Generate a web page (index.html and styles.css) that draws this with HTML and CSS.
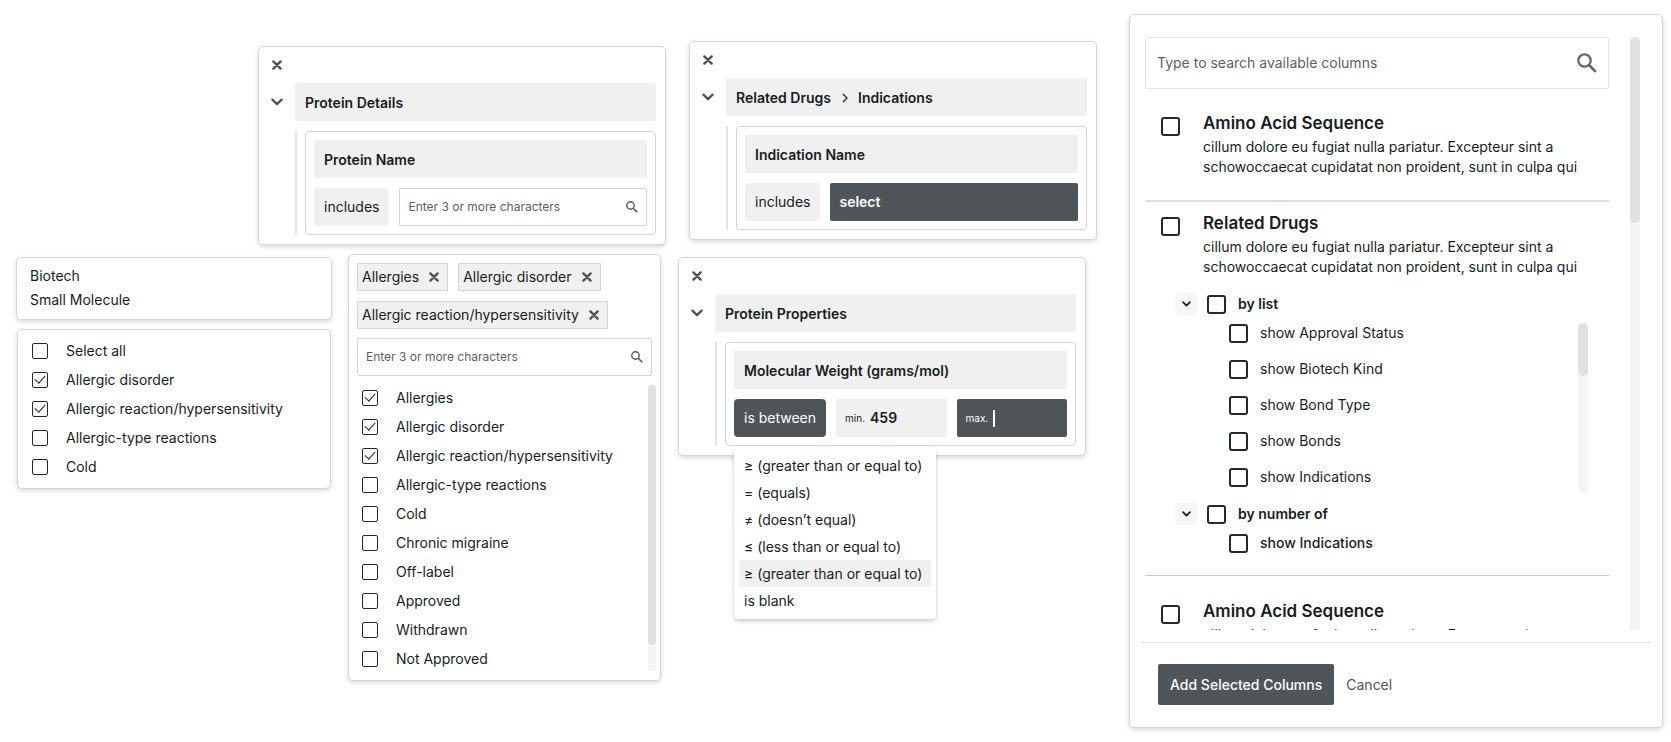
FILE: index.html
```
<!DOCTYPE html>
<html lang="en">
<head>
    <meta charset="utf-8">
    <title>Filters and columns</title>
    <link rel="stylesheet" href="styles.css">
</head>
<body>
    <!-- shared icons -->
    <svg class="sprite" aria-hidden="true">
        <symbol id="close" viewBox="0 0 10 10"><path d="M1.4 1.4l7.2 7.2M8.6 1.4L1.4 8.6" fill="none" stroke="currentColor" stroke-width="2.4" stroke-linecap="round"/></symbol>
        <symbol id="chevron" viewBox="0 0 12 8"><path d="M1.4 1.6L6 6.1l4.6-4.5" fill="none" stroke="currentColor" stroke-width="2.3" stroke-linecap="round" stroke-linejoin="round"/></symbol>
        <symbol id="search" viewBox="0 0 20 20"><circle cx="7.5" cy="7.5" r="6.2" fill="none" stroke="currentColor" stroke-width="2.3"/><path d="M12 12l6.8 6.8" fill="none" stroke="currentColor" stroke-width="2.6"/></symbol>
    </svg>

    <main class="page">
        <div class="canvas">
            <div class="row top-row">
                <section class="card filter low">
                    <button class="icon-button close" aria-label="Remove"><svg><use href="#close"/></svg></button>
                    <div class="group-head">
                        <button class="icon-button toggle" aria-label="Collapse"><svg><use href="#chevron"/></svg></button>
                        <h2 class="bar">Protein Details</h2>
                    </div>
                    <div class="group-body">
                        <div class="rule">
                            <h3 class="bar">Protein Name</h3>
                            <div class="rule-row">
                                <button class="operator">includes</button>
                                <div class="search-box">
                                    <input type="text" aria-label="Protein name" placeholder="Enter 3 or more characters">
                                    <svg><use href="#search"/></svg>
                                </div>
                            </div>
                        </div>
                    </div>
                </section>

                <section class="card filter">
                    <button class="icon-button close" aria-label="Remove"><svg><use href="#close"/></svg></button>
                    <div class="group-head">
                        <button class="icon-button toggle" aria-label="Collapse"><svg><use href="#chevron"/></svg></button>
                        <h2 class="bar">Related Drugs <svg class="crumb" viewBox="0 0 6 10"><path d="M1 1l4 4-4 4" fill="none" stroke="currentColor" stroke-width="1.2"/></svg> Indications</h2>
                    </div>
                    <div class="group-body">
                        <div class="rule">
                            <h3 class="bar">Indication Name</h3>
                            <div class="rule-row">
                                <button class="operator">includes</button>
                                <select class="value-select" aria-label="Indication name">
                                    <option>select</option>
                                </select>
                            </div>
                        </div>
                    </div>
                </section>
            </div>

            <div class="row bottom-row">
                <div class="side">
                    <ul class="card kinds">
                        <li>Biotech</li>
                        <li>Small Molecule</li>
                    </ul>
                    <div class="card checks">
                        <label class="check"><input type="checkbox">Select all</label>
                        <label class="check"><input type="checkbox" checked>Allergic disorder</label>
                        <label class="check"><input type="checkbox" checked>Allergic reaction/hypersensitivity</label>
                        <label class="check"><input type="checkbox">Allergic-type reactions</label>
                        <label class="check"><input type="checkbox">Cold</label>
                    </div>
                </div>

                <section class="card picker">
                    <div class="tags">
                        <span class="tag">Allergies <button class="icon-button" aria-label="Remove"><svg><use href="#close"/></svg></button></span>
                        <span class="tag">Allergic disorder <button class="icon-button" aria-label="Remove"><svg><use href="#close"/></svg></button></span>
                        <span class="tag">Allergic reaction/hypersensitivity <button class="icon-button" aria-label="Remove"><svg><use href="#close"/></svg></button></span>
                    </div>
                    <div class="search-box">
                        <input type="text" aria-label="Search indications" placeholder="Enter 3 or more characters">
                        <svg><use href="#search"/></svg>
                    </div>
                    <div class="picker-list">
                        <div class="options">
                            <label class="check"><input type="checkbox" checked>Allergies</label>
                            <label class="check"><input type="checkbox" checked>Allergic disorder</label>
                            <label class="check"><input type="checkbox" checked>Allergic reaction/hypersensitivity</label>
                            <label class="check"><input type="checkbox">Allergic-type reactions</label>
                            <label class="check"><input type="checkbox">Cold</label>
                            <label class="check"><input type="checkbox">Chronic migraine</label>
                            <label class="check"><input type="checkbox">Off-label</label>
                            <label class="check"><input type="checkbox">Approved</label>
                            <label class="check"><input type="checkbox">Withdrawn</label>
                            <label class="check"><input type="checkbox">Not Approved</label>
                        </div>
                        <div class="scrollbar"><div class="thumb" style="height:91%"></div></div>
                    </div>
                </section>

                <section class="card filter properties">
                    <button class="icon-button close" aria-label="Remove"><svg><use href="#close"/></svg></button>
                    <div class="group-head">
                        <button class="icon-button toggle" aria-label="Collapse"><svg><use href="#chevron"/></svg></button>
                        <h2 class="bar">Protein Properties</h2>
                    </div>
                    <div class="group-body">
                        <div class="rule">
                            <h3 class="bar">Molecular Weight (grams/mol)</h3>
                            <div class="rule-row">
                                <div class="operator-wrap">
                                    <button class="operator active">is between</button>
                                    <div class="menu">
                                        <button>≥ (greater than or equal to)</button>
                                        <button>= (equals)</button>
                                        <button>≠ (doesn’t equal)</button>
                                        <button>≤ (less than or equal to)</button>
                                        <button class="current">≥ (greater than or equal to)</button>
                                        <button>is blank</button>
                                    </div>
                                </div>
                                <label class="range">min. <input type="text" value="459"></label>
                                <label class="range active">max. <input type="text"></label>
                            </div>
                        </div>
                    </div>
                </section>
            </div>
        </div>

        <section class="card columns">
            <div class="columns-body">
                <div class="columns-list">
                    <div class="column-search">
                        <input type="text" aria-label="Search columns" placeholder="Type to search available columns">
                        <svg><use href="#search"/></svg>
                    </div>

                    <div class="column first">
                        <label class="column-head">
                            <input type="checkbox">
                            <span><strong>Amino Acid Sequence</strong>cillum dolore eu fugiat nulla pariatur. Excepteur sint a<br>schowoccaecat cupidatat non proident, sunt in culpa qui</span>
                        </label>
                    </div>

                    <div class="column">
                        <label class="column-head">
                            <input type="checkbox">
                            <span><strong>Related Drugs</strong>cillum dolore eu fugiat nulla pariatur. Excepteur sint a<br>schowoccaecat cupidatat non proident, sunt in culpa qui</span>
                        </label>
                        <div class="sub-head">
                            <button class="icon-button expand" aria-label="Collapse"><svg><use href="#chevron"/></svg></button>
                            <label><input type="checkbox">by list</label>
                        </div>
                        <div class="sub-list">
                            <div class="sub-items">
                                <label><input type="checkbox">show Approval Status</label>
                                <label><input type="checkbox">show Biotech Kind</label>
                                <label><input type="checkbox">show Bond Type</label>
                                <label><input type="checkbox">show Bonds</label>
                                <label><input type="checkbox">show Indications</label>
                            </div>
                            <div class="scrollbar wide"><div class="thumb" style="height:31%"></div></div>
                        </div>
                        <div class="sub-head">
                            <button class="icon-button expand" aria-label="Collapse"><svg><use href="#chevron"/></svg></button>
                            <label><input type="checkbox">by number of</label>
                        </div>
                        <div class="sub-list">
                            <div class="sub-items medium">
                                <label><input type="checkbox">show Indications</label>
                            </div>
                        </div>
                    </div>

                    <div class="column last">
                        <label class="column-head">
                            <input type="checkbox">
                            <span><strong>Amino Acid Sequence</strong>cillum dolore eu fugiat nulla pariatur. Excepteur sint a</span>
                        </label>
                    </div>
                </div>
                <div class="scrollbar wide tall"><div class="thumb" style="height:30%"></div></div>
            </div>
            <div class="columns-foot">
                <button class="primary">Add Selected Columns</button>
                <button class="plain">Cancel</button>
            </div>
        </section>
    </main>
</body>
</html>
```
FILE: styles.css
```
* {
    box-sizing: border-box;
}
body {
    margin: 0;
    background: #fff;
    color: #161d21;
    font: 14px/20px Inter, "Liberation Sans", sans-serif;
}
h2, h3, ul {
    margin: 0;
    padding: 0;
    font-size: 14px;
    list-style: none;
}
button, input, select {
    margin: 0;
    padding: 0;
    border: 0;
    background: none;
    color: inherit;
    font: inherit;
}
.sprite {
    display: none;
}
.page {
    display: flex;
    align-items: flex-start;
    gap: 32px;
    padding: 14px 8px 14px 16px;
}
.canvas {
    padding-top: 27px;
}
.card {
    background: #fff;
    border: 1px solid #d5d6d7;
    border-radius: 5px;
    box-shadow: 0 2px 5px rgba(0, 0, 0, 0.15);
}
.row {
    display: flex;
    align-items: flex-start;
}
.top-row {
    justify-content: flex-end;
    gap: 23px;
}
.low {
    margin-top: 5px;
}
.bottom-row {
    gap: 16px;
    margin-top: 9px;
    padding-right: 11px;
}
.icon-button {
    display: flex;
    align-items: center;
    justify-content: center;
    color: #4e5357;
}
.icon-button svg {
    width: 10px;
    height: 10px;
}

/* filter cards */
.filter {
    width: 408px;
    padding: 0 9px 9px 8px;
}
.close {
    width: 20px;
    height: 36px;
}
.group-head {
    display: flex;
    align-items: center;
    gap: 8px;
}
.toggle {
    width: 20px;
    height: 38px;
}
.toggle svg {
    width: 12px;
    height: 8px;
}
.bar {
    flex: 1;
    padding: 10px 10px 8px;
    background: #f0f0f0;
    border-radius: 2px;
    font-weight: 600;
}
.crumb {
    width: 6px;
    height: 10px;
    margin: 0 7px;
}
.group-body {
    margin: 10px 0 0 28px;
    padding-left: 8px;
    border-left: 2px solid #e3e3e4;
}
.rule {
    padding: 8px;
    border: 1px solid #d3d4d5;
    border-radius: 4px;
}
.rule-row {
    display: flex;
    gap: 10px;
    margin-top: 10px;
}
.operator {
    height: 38px;
    padding: 0 10px;
    background: #f0f0f0;
    border-radius: 4px;
}
.active {
    background: #4f5559;
    color: #fff;
}
.search-box {
    display: flex;
    flex: 1;
    align-items: center;
    min-width: 0;
    height: 38px;
    padding: 0 8px;
    border: 1px solid #d3d4d5;
    border-radius: 2px;
    color: #4e5357;
}
.search-box input {
    flex: 1;
    min-width: 0;
    font-size: 12px;
}
.search-box svg {
    width: 12px;
    height: 12px;
}
::placeholder {
    color: #5a5f62;
    opacity: 1;
}
.value-select {
    flex: 1;
    height: 38px;
    padding: 0 9px;
    appearance: none;
    background: #4f5559;
    border-radius: 2px;
    color: #fff;
    font-weight: 600;
}
.range {
    display: flex;
    flex: 1;
    align-items: center;
    gap: 5px;
    height: 38px;
    padding: 0 9px;
    border-radius: 2px;
    font-size: 10px;
}
.range:not(.active) {
    background: #f0f0f0;
}
.range input {
    width: 100%;
    min-width: 0;
    font-size: 14px;
    font-weight: 600;
}
.range.active input {
    height: 17px;
    border-left: 2px solid #fff;
}

/* operator menu */
.properties {
    margin: 3px 0 0 1px;
}
.operator-wrap {
    position: relative;
}
.menu {
    position: absolute;
    top: 48px;
    left: 0;
    z-index: 1;
    min-width: 202px;
    padding: 5px;
    background: #fff;
    border-radius: 4px;
    box-shadow: 0 2px 4px rgba(0, 0, 0, 0.22);
}
.menu button {
    display: block;
    width: 100%;
    padding: 0 5px;
    line-height: 27px;
    text-align: left;
    white-space: nowrap;
}
.menu .current {
    background: #f0f0f0;
}

/* lists */
.side {
    width: 316px;
    margin-top: 3px;
}
.kinds {
    padding: 6px 13px 7px;
    line-height: 24px;
}
.checks {
    margin: 9px 1px 0;
    padding: 6px 14px 7px;
}
.check {
    display: flex;
    align-items: center;
    gap: 18px;
    height: 29px;
}
input[type=checkbox] {
    flex: none;
    display: flex;
    align-items: center;
    justify-content: center;
    width: 16px;
    height: 16px;
    appearance: none;
    background: #fff;
    border: 1px solid #22282c;
    border-radius: 2px;
}
input[type=checkbox]:checked::after {
    content: "";
    width: 5px;
    height: 9px;
    margin-bottom: 3px;
    border: solid #22282c;
    border-width: 0 1px 1px 0;
    transform: rotate(42deg);
}
.picker {
    width: 313px;
    padding: 8px 4px 7px 8px;
}
.tags {
    display: flex;
    flex-wrap: wrap;
    gap: 10px;
}
.tag {
    display: flex;
    align-items: center;
    gap: 10px;
    height: 28px;
    padding: 0 8px 0 4px;
    background: #f0f0f0;
    border: 1px solid #d3d4d5;
    border-radius: 1px;
}
.picker .search-box {
    margin: 9px 4px 0 0;
}
.picker-list {
    display: flex;
    margin-top: 7px;
}
.options {
    flex: 1;
    padding-left: 5px;
}
.scrollbar {
    width: 8px;
    background: #f5f5f5;
    border-radius: 5px;
}
.picker .scrollbar {
    margin: 2px 0;
}
.thumb {
    background: #e0e0e0;
    border-radius: 5px;
}
.wide {
    width: 10px;
}

/* column chooser */
.columns {
    flex: 1;
    min-width: 500px;
    padding: 22px 11px;
}
.columns-body {
    display: flex;
    justify-content: space-between;
    height: 593px;
    padding: 0 11px 0 4px;
    overflow: hidden;
}
.columns-list {
    flex: 1;
    margin-right: 21px;
}
.tall {
    height: 620px;
}
.column-search {
    display: flex;
    align-items: center;
    height: 52px;
    padding: 0 11px;
    border: 1px solid #e3e3e4;
    border-radius: 2px;
    color: #63686b;
}
.column-search input {
    flex: 1;
}
.column-search svg {
    width: 20px;
    height: 20px;
}
.column {
    padding: 10px 0 22px;
    border-bottom: 1px solid #c9cacb;
}
.first {
    padding: 23px 0;
    border-bottom: 2px solid #dfdfe0;
}
.last {
    padding-top: 24px;
}
.column-head {
    display: flex;
    align-items: flex-start;
    gap: 23px;
    padding-left: 16px;
}
.columns input[type=checkbox] {
    width: 19px;
    height: 19px;
    border-width: 2px;
    border-radius: 3px;
}
.column-head input[type=checkbox] {
    margin-top: 5px;
}
.column-head strong {
    display: block;
    margin-bottom: 3px;
    font-size: 17px;
    font-weight: 600;
    line-height: 22px;
}
.sub-head {
    display: flex;
    align-items: center;
    gap: 10px;
    height: 24px;
    margin: 15px 0 0 30px;
    font-weight: 600;
}
.expand {
    width: 22px;
    height: 22px;
    background: #f6f6f6;
    border-radius: 4px;
    color: #161d21;
}
.expand svg {
    width: 9px;
    height: 6px;
}
.sub-head label, .sub-items label {
    display: flex;
    align-items: center;
    gap: 12px;
}
.sub-list {
    display: flex;
    justify-content: space-between;
    margin-top: 7px;
    padding: 0 21px 0 84px;
}
.sub-items {
    display: flex;
    flex-direction: column;
    gap: 16px;
}
.sub-list .scrollbar {
    height: 170px;
    margin-bottom: -7px;
}
.medium {
    font-weight: 500;
}
.columns-foot {
    display: flex;
    align-items: center;
    gap: 12px;
    margin-top: 12px;
    padding: 21px 17px 0;
    border-top: 1px solid #e3e3e4;
}
.primary {
    height: 41px;
    padding: 0 12px;
    background: #4f5559;
    border-radius: 2px;
    color: #fff;
    font-weight: 500;
}
.plain {
    color: #4e5357;
}
```
